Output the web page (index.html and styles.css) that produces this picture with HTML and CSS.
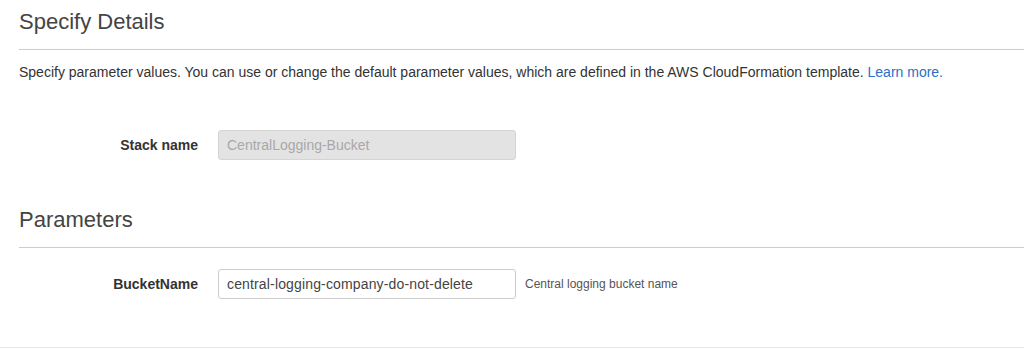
FILE: index.html
```html
<!DOCTYPE html>
<html>
<head>
  <title>Specify Details</title>
  <link rel="stylesheet" href="styles.css">
</head>
<body>
  <div class="page">
    <div class="section">
      <h2 class="section-title">Specify Details</h2>
      <p class="section-desc">
        Specify parameter values. You can use or change the default parameter values, which are defined in the AWS CloudFormation template.
        <a href="#">Learn more.</a>
      </p>
      <div class="form-row stack-row">
        <label class="form-label" for="stackName">Stack name</label>
        <input class="form-input" id="stackName" type="text" placeholder="CentralLogging-Bucket" disabled>
      </div>
    </div>

    <div class="section">
      <h2 class="section-title">Parameters</h2>
      <div class="form-row param-row">
        <label class="form-label" for="bucketName">BucketName</label>
        <input class="form-input" id="bucketName" type="text" value="central-logging-company-do-not-delete">
        <span class="form-help">Central logging bucket name</span>
      </div>
    </div>
  </div>
  <div class="footer-rule"></div>
</body>
</html>
```

FILE: styles.css
```css
:root {
  --text: #444444;
  --text-secondary: #555555;
  --border: #cccccc;
  --link: #2a6fc9;
}

body {
  margin: 0;
  font-family: 'Liberation Sans', Arial, sans-serif;
  background-color: #ffffff;
  color: var(--text);
}

.page {
  padding: 9px 0 0 19px;
}

.section-title {
  margin: 0;
  padding-bottom: 14px;
  font-size: 22px;
  line-height: 26px;
  font-weight: 400;
  color: #444444;
  border-bottom: 1px solid var(--border);
}

.section-desc {
  margin: 14px 0 0;
  font-size: 14px;
  line-height: 17px;
  color: #333333;
}

.section-desc a {
  color: var(--link);
  text-decoration: none;
}

.form-row {
  display: grid;
  grid-template-columns: 179px 298px auto;
  column-gap: 20px;
  align-items: center;
}

.stack-row {
  margin-top: 49px;
}

.param-row {
  margin-top: 21px;
}

.form-label {
  text-align: right;
  font-size: 14px;
  font-weight: 700;
  color: #333333;
}

.form-input {
  box-sizing: border-box;
  height: 30px;
  padding: 0 8px;
  font-family: inherit;
  font-size: 14px;
  color: #444444;
  background: #ffffff;
  border: 1px solid var(--border);
  border-radius: 3px;
}

#bucketName {
  letter-spacing: 0.15px;
}

.form-input:disabled {
  background: #e3e3e3;
  border-color: #d4d4d4;
}

.form-input::placeholder {
  color: #a8a8a8;
}

.form-help {
  margin-left: -11px;
  font-size: 12px;
  color: var(--text-secondary);
}

.section + .section {
  margin-top: 47px;
}

.footer-rule {
  margin-top: 48px;
  border-top: 1px solid #e8e8e8;
}
```
